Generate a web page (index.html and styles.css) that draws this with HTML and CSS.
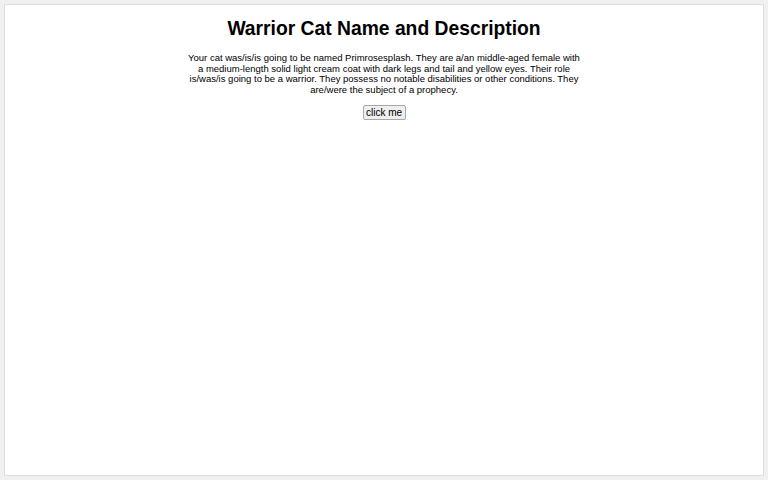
FILE: index.html
```html
<!DOCTYPE html>
<html>
<head>
<meta charset="utf-8">
<link rel="stylesheet" href="styles.css">
</head>
<body>
<main class="panel">
  <h1 class="title">Warrior Cat Name and Description</h1>
  <p class="desc">Your cat was/is/is going to be named Primrosesplash. They are a/an middle-aged female with a medium-length solid light cream coat with dark legs and tail and yellow eyes. Their role is/was/is going to be a warrior. They possess no notable disabilities or other conditions. They are/were the subject of a prophecy.</p>
  <button class="btn">click me</button>
</main>
</body>
</html>
```
FILE: styles.css
```css
html, body { margin: 0; height: 100%; }
body {
  background: #f0f0f0;
  padding: 4px;
  box-sizing: border-box;
  font-family: "Liberation Sans", Arial, sans-serif;
}
.panel {
  background: #fff;
  border: 1px solid #dcdcdc;
  height: 100%;
  box-sizing: border-box;
  display: flex;
  flex-direction: column;
  align-items: center;
  padding-top: 13px;
}
.title {
  font-size: 19.3px;
  font-weight: bold;
  margin: 0 0 13px;
  color: #000;
}
.desc {
  font-size: 9.5px;
  line-height: 10.7px;
  width: 396px;
  text-align: center;
  margin: 0 0 9px;
  color: #000;
}
.btn {
  font-family: "Liberation Sans", Arial, sans-serif;
  font-size: 10px;
  height: 15px;
  width: 43px;
  padding: 0;
  background: #efefef;
  border: 1px solid #a9a9a9;
  border-radius: 2px;
  color: #000;
}
```
